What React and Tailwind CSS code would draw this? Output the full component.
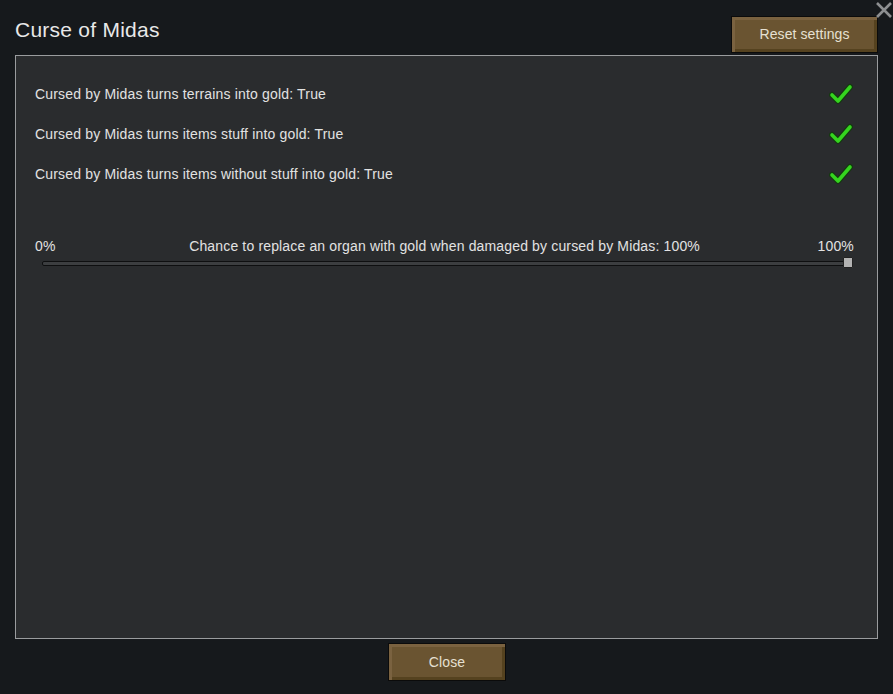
import { useState } from 'react';

const font = { fontFamily: '"Liberation Sans", Arial, sans-serif' };

const settings = [
  'Cursed by Midas turns terrains into gold: True',
  'Cursed by Midas turns items stuff into gold: True',
  'Cursed by Midas turns items without stuff into gold: True',
];

const Check = () => (
  <svg width="24" height="22" viewBox="0 0 24 22">
    <polyline points="3,12 9,18 21,4" fill="none" stroke="#143a10" strokeWidth="6" strokeLinecap="round" strokeLinejoin="round" />
    <polyline points="3,12 9,18 21,4" fill="none" stroke="#35d41f" strokeWidth="3.6" strokeLinecap="round" strokeLinejoin="round" />
  </svg>
);

const GameButton = ({ children, className = '' }) => (
  <button
    className={`bg-[#6a5431] border border-[#0b0b0b] text-[#e6e0d2] text-[14px] tracking-[0.1px] shadow-[inset_3px_3px_0_#7a6240,inset_-3px_-3px_0_#55421f] ${className}`}
  >
    {children}
  </button>
);

const App = () => {
  const [value] = useState(100);

  return (
    <div className="w-[893px] h-[694px] bg-[#16191c] relative flex flex-col px-[15px] pt-[16px]" style={font}>
      <div className="flex justify-between items-start h-[39px]">
        <h1 className="text-[21px] tracking-[0.25px] text-[#e8e8e8] leading-[28px]">Curse of Midas</h1>
        <GameButton className="w-[147px] h-[37px]">Reset settings</GameButton>
      </div>

      <button className="absolute top-[1px] right-[0px] w-[18px] h-[18px] flex items-center justify-center">
        <svg width="18" height="18" viewBox="0 0 18 18">
          <path d="M2 2 L16 16 M16 2 L2 16" stroke="#8d8f91" strokeWidth="2.6" />
        </svg>
      </button>

      <div className="h-[584px] border border-[#9a9c9e] bg-[#2a2c2e] px-[19px] pt-[18px] flex flex-col">
        {settings.map((s) => (
          <div key={s} className="h-[40px] flex items-center justify-between pr-[5px] text-[14px] tracking-[0.17px] text-[#e2e2e2]">
            <span>{s}</span>
            <Check />
          </div>
        ))}

        <div className="mt-[44px] pr-[4px]">
          <div className="flex justify-between text-[14px] tracking-[0.15px] text-[#e2e2e2] leading-[16px]">
            <span>0%</span>
            <span className="pl-[16px]">Chance to replace an organ with gold when damaged by cursed by Midas: {value}%</span>
            <span>100%</span>
          </div>
          <div className="relative mt-[4px] ml-[7px] mr-[1px] h-[10px] flex items-center">
            <div className="w-full h-[5px] bg-[#3c3e40] border border-[#0e0f10] rounded-[2px]" />
            <div className="absolute right-0 top-[-1px] w-[10px] h-[11px] bg-[#b3b3b3] border border-[#222] rounded-[1px]" />
          </div>
        </div>
      </div>

      <div className="flex justify-center pt-[4px]">
        <GameButton className="w-[118px] h-[38px] ml-[1px]">Close</GameButton>
      </div>
    </div>
  );
};

export default App;
